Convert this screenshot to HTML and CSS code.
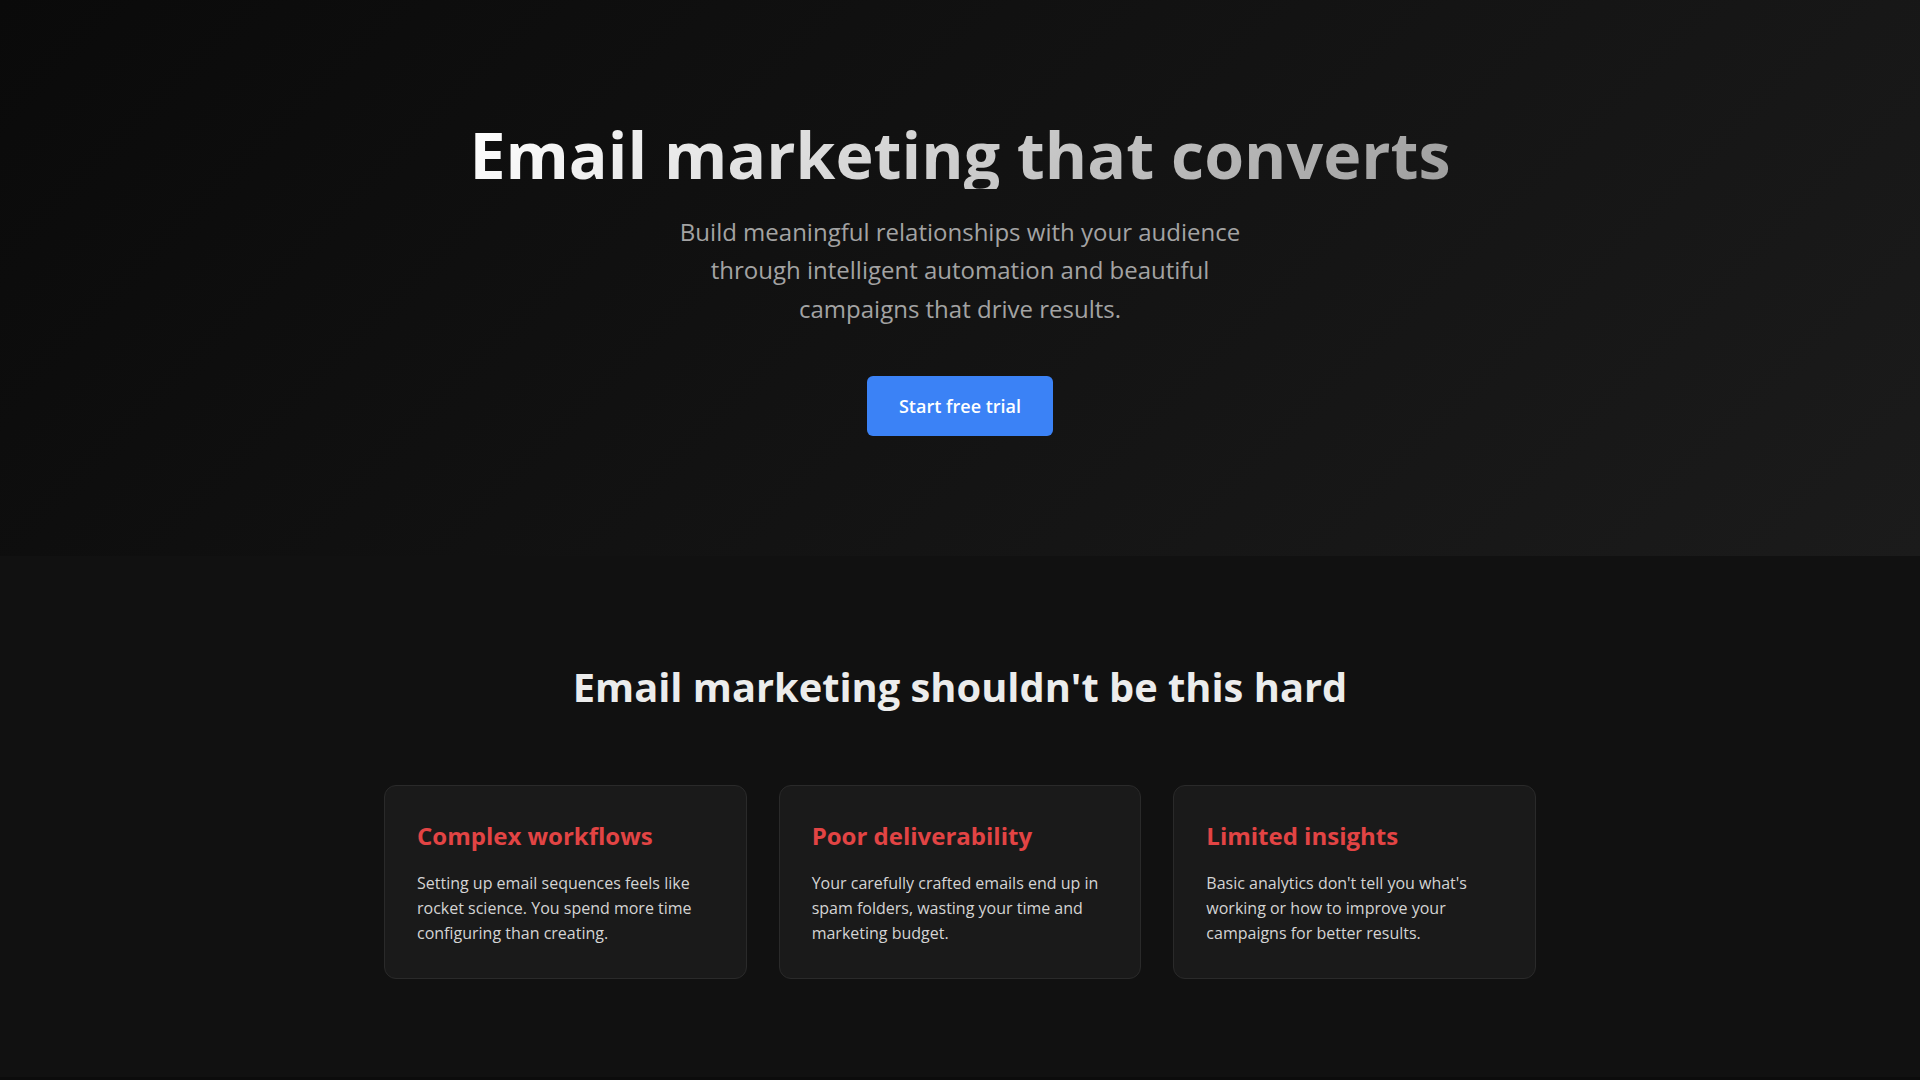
FILE: index.html
```html
<!DOCTYPE html>
<html lang="en">
<head>
<meta charset="utf-8">
<title>Email marketing that converts</title>
<link rel="stylesheet" href="styles.css">
</head>
<body>
<section class="hero">
  <h1 class="hero-title">Email marketing that converts</h1>
  <p class="hero-sub">Build meaningful relationships with your audience through intelligent automation and beautiful campaigns that drive results.</p>
  <a class="btn-primary" href="#">Start free trial</a>
</section>
<section class="problems">
  <h2 class="section-title">Email marketing shouldn't be this hard</h2>
  <div class="card-grid">
    <div class="card">
      <h3 class="card-title">Complex workflows</h3>
      <p class="card-text">Setting up email sequences feels like rocket science. You spend more time configuring than creating.</p>
    </div>
    <div class="card">
      <h3 class="card-title">Poor deliverability</h3>
      <p class="card-text">Your carefully crafted emails end up in spam folders, wasting your time and marketing budget.</p>
    </div>
    <div class="card">
      <h3 class="card-title">Limited insights</h3>
      <p class="card-text">Basic analytics don't tell you what's working or how to improve your campaigns for better results.</p>
    </div>
  </div>
</section>
<section class="next"></section>
</body>
</html>
```
FILE: styles.css
```css
* { box-sizing: border-box; }
html, body { margin: 0; padding: 0; }
body {
  background: #111111;
  color: #e5e5e5;
  font-family: "Open Sans", "Noto Sans", "Liberation Sans", sans-serif;
}
.hero {
  background: linear-gradient(135deg, #0a0a0a 0%, #1b1b1b 100%);
  padding: 119px 24px 120px;
  display: flex;
  flex-direction: column;
  align-items: center;
  text-align: center;
}
.hero-title {
  display: inline-block;
  margin: 0 0 24px;
  font-size: 64.5px;
  line-height: 70px;
  font-weight: 700;
  background: linear-gradient(135deg, #ffffff 0%, #9e9e9e 100%);
  -webkit-background-clip: text;
  background-clip: text;
  color: transparent;
}
.hero-sub {
  margin: 0 0 48px;
  max-width: 600px;
  font-size: 24px;
  line-height: 1.6;
  font-weight: 400;
  color: #a3a3a3;
}
.btn-primary {
  display: inline-block;
  background: #3b82f6;
  color: #ffffff;
  text-decoration: none;
  font-size: 18px;
  line-height: 28px;
  font-weight: 600;
  padding: 16px 32px;
  border-radius: 6px;
}
.problems {
  padding: 107px 24px 98px;
  background: #111111;
}
.section-title {
  margin: 0 0 74px;
  text-align: center;
  font-size: 39.8px;
  line-height: 48px;
  font-weight: 700;
  color: #ececec;
}
.card-grid {
  max-width: 1152px;
  margin: 0 auto;
  display: grid;
  grid-template-columns: repeat(3, 1fr);
  gap: 32px;
}
.card {
  background: #1a1a1a;
  border: 1px solid #2a2a2a;
  border-radius: 12px;
  padding: 32px;
}
.card-title {
  margin: 0 0 17px;
  font-size: 24px;
  line-height: 1.5;
  font-weight: 700;
  color: #e24444;
}
.card-text {
  margin: 0;
  font-size: 16px;
  line-height: 1.55;
  color: #d4d4d4;
}
.next {
  height: 40px;
  background: #0c0c0c;
}
```
